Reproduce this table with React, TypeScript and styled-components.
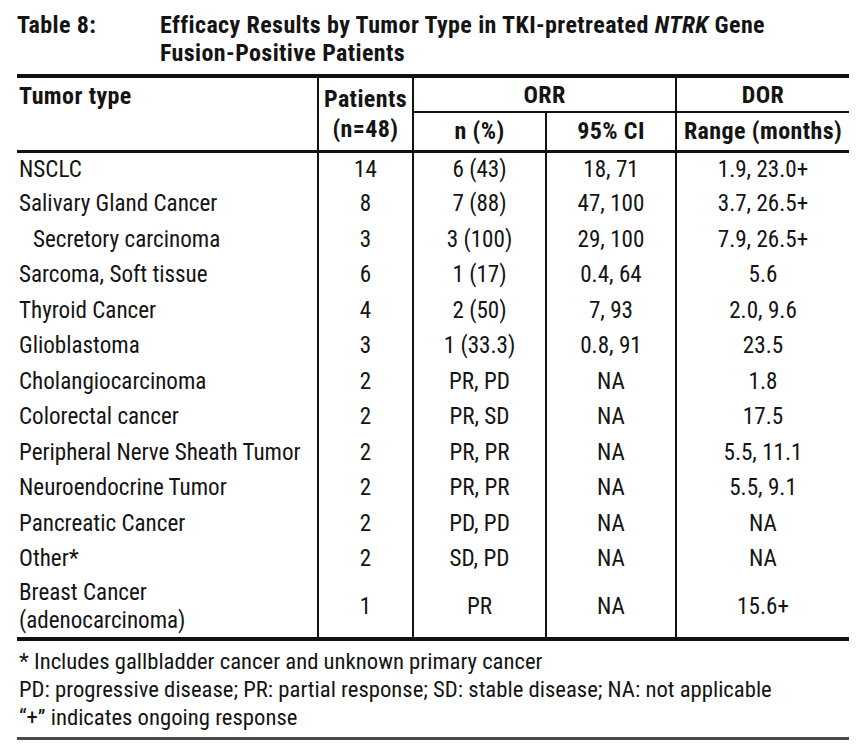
import React from "react";
import styled, { createGlobalStyle } from "styled-components";

const Global = createGlobalStyle`
  html, body { margin: 0; padding: 0; background: #ffffff; }
  body {
    font-family: "Roboto Condensed", "Liberation Sans", Arial, sans-serif;
    color: #141414;
  }
`;

const Page = styled.div`
  width: 867px;
  height: 751px;
  box-sizing: border-box;
  padding: 11px 18px 0 17px;
  background: #fff;
  overflow: hidden;
`;

const Title = styled.div`
  display: grid;
  grid-template-columns: 143px 1fr;
  font-weight: 700;
  font-size: 24px;
  letter-spacing: 0.4px;
  line-height: 28px;
  padding-bottom: 7px;
`;

const Table = styled.table`
  width: 832px;
  border-collapse: collapse;
  font-size: 23.1px;
  table-layout: fixed;
  border-top: 4px solid #111;
  border-bottom: 4px solid #111;
`;

const Head = styled.thead`
  border-bottom: 3px solid #111;
`;

const Th = styled.th<{ $align?: "left" | "center"; $top?: boolean; $divider?: boolean; $rule?: boolean; $tall?: boolean }>`
  font-weight: 700;
  font-size: 24px;
  letter-spacing: 0.4px;
  text-align: ${(p) => p.$align ?? "center"};
  vertical-align: ${(p) => (p.$top ? "top" : "middle")};
  padding: ${(p) => (p.$align === "left" ? "3px 0 0 2px" : "0")};
  line-height: 30px;
  height: ${(p) => (p.$tall ? "39px" : "36px")};
  border-left: ${(p) => (p.$divider ? "2px solid #111" : "none")};
  border-bottom: ${(p) => (p.$rule ? "2px solid #111" : "none")};
  box-sizing: border-box;
  white-space: nowrap;
`;

const Td = styled.td<{ $first?: boolean; $indent?: boolean }>`
  text-align: ${(p) => (p.$first ? "left" : "center")};
  padding: 0 0 0 ${(p) => (p.$indent ? "16px" : p.$first ? "2px" : "0")};
  border-left: ${(p) => (p.$first ? "none" : "2px solid #111")};
  line-height: 28px;
  vertical-align: middle;
  white-space: nowrap;
`;

const Tr = styled.tr<{ $tall?: boolean }>`
  height: ${(p) => (p.$tall ? "62px" : "35.5px")};
`;

const Notes = styled.div`
  font-size: 22.7px;
  line-height: 28px;
  padding: 7px 0 5px 2px;
  border-bottom: 3px solid #4a4a4a;
  width: 832px;
  box-sizing: border-box;
  white-space: nowrap;
`;

type Row = { type: string; n: string; pct: string; ci: string; dor: string; indent?: boolean };

const rows: Row[] = [
  { type: "NSCLC", n: "14", pct: "6 (43)", ci: "18, 71", dor: "1.9, 23.0+" },
  { type: "Salivary Gland Cancer", n: "8", pct: "7 (88)", ci: "47, 100", dor: "3.7, 26.5+" },
  { type: "Secretory carcinoma", n: "3", pct: "3 (100)", ci: "29, 100", dor: "7.9, 26.5+", indent: true },
  { type: "Sarcoma, Soft tissue", n: "6", pct: "1 (17)", ci: "0.4, 64", dor: "5.6" },
  { type: "Thyroid Cancer", n: "4", pct: "2 (50)", ci: "7, 93", dor: "2.0, 9.6" },
  { type: "Glioblastoma", n: "3", pct: "1 (33.3)", ci: "0.8, 91", dor: "23.5" },
  { type: "Cholangiocarcinoma", n: "2", pct: "PR, PD", ci: "NA", dor: "1.8" },
  { type: "Colorectal cancer", n: "2", pct: "PR, SD", ci: "NA", dor: "17.5" },
  { type: "Peripheral Nerve Sheath Tumor", n: "2", pct: "PR, PR", ci: "NA", dor: "5.5, 11.1" },
  { type: "Neuroendocrine Tumor", n: "2", pct: "PR, PR", ci: "NA", dor: "5.5, 9.1" },
  { type: "Pancreatic Cancer", n: "2", pct: "PD, PD", ci: "NA", dor: "NA" },
  { type: "Other*", n: "2", pct: "SD, PD", ci: "NA", dor: "NA" },
];

export default function App() {
  return (
    <Page>
      <Global />
      <Title>
        <span>Table 8:</span>
        <span>
          Efficacy Results by Tumor Type in TKI-pretreated <i>NTRK</i> Gene
          <br />
          Fusion-Positive Patients
        </span>
      </Title>
      <Table>
        <colgroup>
          <col style={{ width: 301 }} />
          <col style={{ width: 95 }} />
          <col style={{ width: 133 }} />
          <col style={{ width: 130 }} />
          <col style={{ width: 173 }} />
        </colgroup>
        <Head>
          <tr>
            <Th $align="left" $top rowSpan={2}>Tumor type</Th>
            <Th $divider rowSpan={2}>Patients<br />(n=48)</Th>
            <Th $divider $rule colSpan={2}>ORR</Th>
            <Th $divider $rule>DOR</Th>
          </tr>
          <tr>
            <Th $divider $tall>n (%)</Th>
            <Th $divider $tall>95% CI</Th>
            <Th $divider $tall>Range (months)</Th>
          </tr>
        </Head>
        <tbody>
          {rows.map((r) => (
            <Tr key={r.type}>
              <Td $first $indent={r.indent}>{r.type}</Td>
              <Td>{r.n}</Td>
              <Td>{r.pct}</Td>
              <Td>{r.ci}</Td>
              <Td>{r.dor}</Td>
            </Tr>
          ))}
          <Tr $tall>
            <Td $first>Breast Cancer<br />(adenocarcinoma)</Td>
            <Td>1</Td>
            <Td>PR</Td>
            <Td>NA</Td>
            <Td>15.6+</Td>
          </Tr>
        </tbody>
      </Table>
      <Notes>
        * Includes gallbladder cancer and unknown primary cancer
        <br />
        PD: progressive disease; PR: partial response; SD: stable disease; NA: not applicable
        <br />
        “+” indicates ongoing response
      </Notes>
    </Page>
  );
}
